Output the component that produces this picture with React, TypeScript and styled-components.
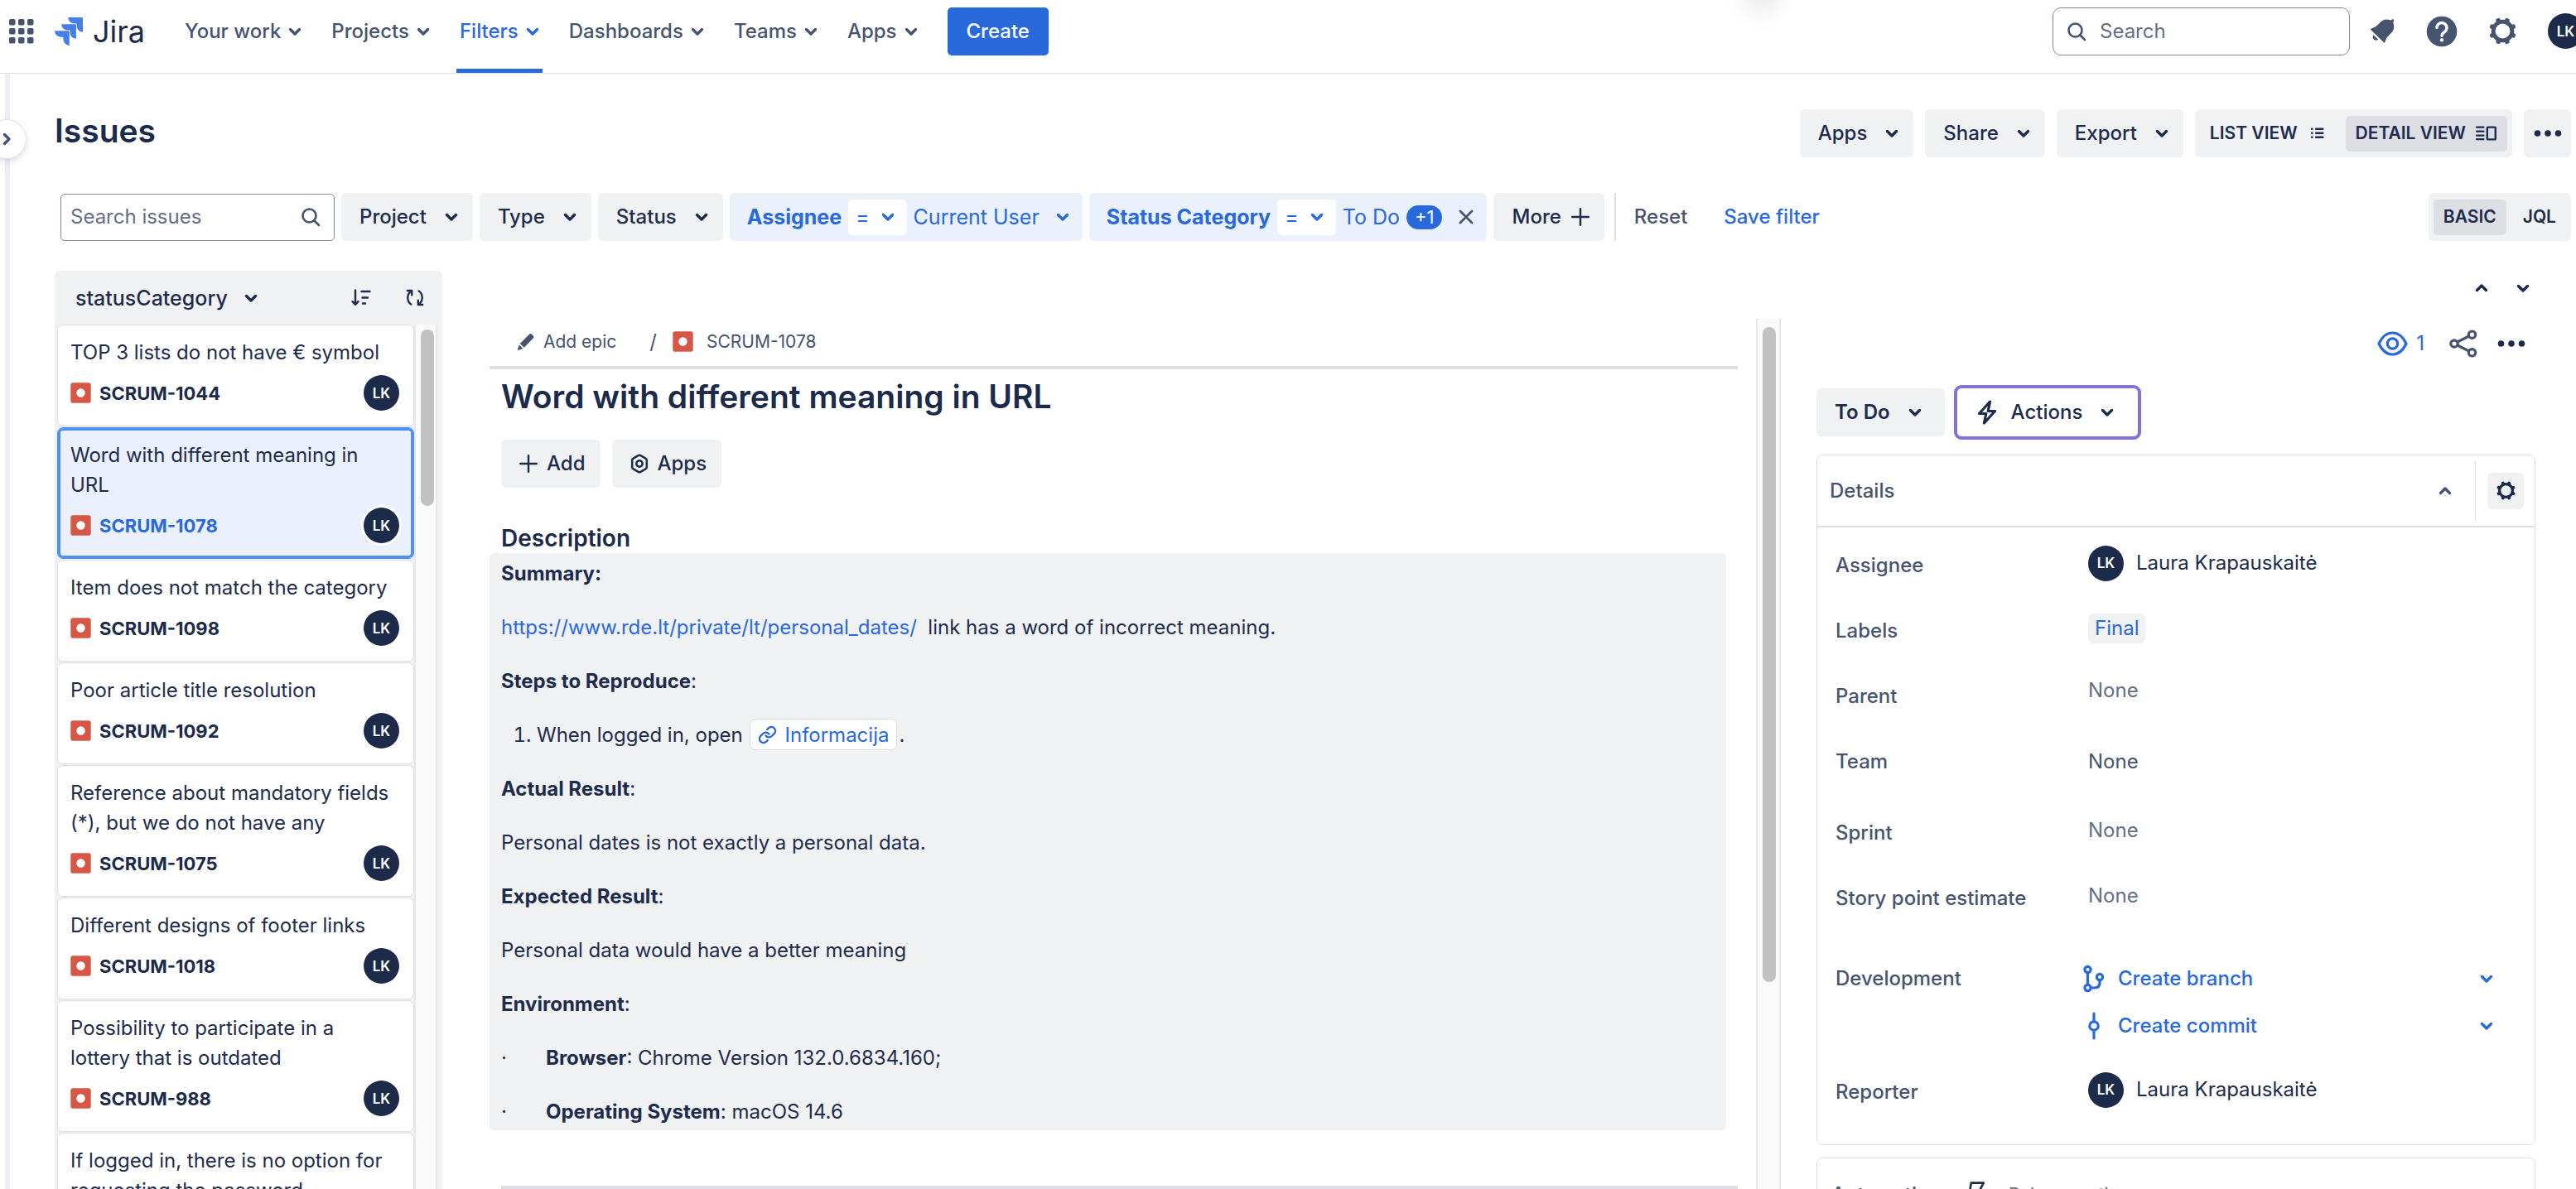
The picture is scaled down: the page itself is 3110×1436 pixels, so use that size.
import React from 'react';
import styled, { createGlobalStyle, css } from 'styled-components';

const color = {
  ink: '#1c2b4a',
  text: '#1d2c4c',
  subtle: '#46546f',
  faint: '#646f86',
  blue: '#2869dc',
  focus: '#4f8ff7',
  selected: '#eaf0fc',
  grey: '#f0f1f3',
  pressed: '#dddee4',
  line: '#dcdfe4',
  bug: '#d65745',
  purple: '#8073d9',
};

const GlobalStyle = createGlobalStyle`
  * { box-sizing: border-box; }
  body {
    margin: 0;
    background: #fff;
    color: ${color.text};
    font-family: Inter, "Liberation Sans", sans-serif;
    font-size: 24px;
    line-height: 36px;
  }
  button, input { font: inherit; color: inherit; }
  button { border: 0; padding: 0; margin: 0; background: none; cursor: pointer; }
  a { color: ${color.blue}; text-decoration: none; }
  h1, h2, h3, p, ol, ul, dl, dd, dt { margin: 0; padding: 0; }
  ul { list-style: none; }
  svg { display: block; flex: none; }
`;

/* ---------- icons ---------- */

const Chevron = ({ up = false }: { up?: boolean }) => (
  <svg width="16" height="16" viewBox="0 0 16 16" fill="none" stroke="currentColor" strokeWidth="3.4" strokeLinecap="round" strokeLinejoin="round" aria-hidden="true">
    <path d={up ? 'M2.5 10.5 8 5l5.500 5.500' : 'M2.500 5.500 8 11l5.500-5.500'} />
  </svg>
);

const SwitcherIcon = () => (
  <svg width="30" height="30" viewBox="0 0 30 30" fill="currentColor" aria-hidden="true">
    {[0, 11, 22].map((y) => [0, 11, 22].map((x) => <rect key={`${x}-${y}`} x={x} y={y} width="7.500" height="7.500" rx="1.800" />))}
  </svg>
);

const JiraMark = () => (
  <svg width="34" height="34" viewBox="0 0 24 24" fill="#467fe6" aria-hidden="true">
    <path d="M11.571 11.513H0a5.218 5.218 0 0 0 5.232 5.215h2.130v2.057A5.215 5.215 0 0 0 12.575 24V12.518a1.005 1.005 0 0 0-1.005-1.005zm5.723-5.756H5.736a5.215 5.215 0 0 0 5.215 5.214h2.129v2.058a5.218 5.218 0 0 0 5.215 5.214V6.758a1.001 1.001 0 0 0-1.001-1.001zM23.013 0H11.455a5.215 5.215 0 0 0 5.215 5.215h2.129v2.057A5.215 5.215 0 0 0 24 12.483V1.005A1.001 1.001 0 0 0 23.013 0z" />
  </svg>
);

const SearchIcon = () => (
  <svg width="24" height="24" viewBox="0 0 24 24" fill="none" stroke={color.subtle} strokeWidth="2.600" strokeLinecap="round" aria-hidden="true">
    <circle cx="10.500" cy="10.500" r="8" />
    <path d="m16.500 16.500 5.500 5.500" />
  </svg>
);

const BellIcon = () => (
  <svg width="30" height="30" viewBox="0 0 30 30" fill="currentColor" aria-hidden="true">
    <path d="M.500 12.200 7 9.200C10 7.500 12 4 15.500 1.800 18.500 0 22 .200 25.200 1.500L27.500.300q1.800-.200 1.600 1.400L28.300 4.500C29.800 8 29.600 12 27.500 15c-2 3-5.500 5-7.200 8L17.800 29z" />
    <path d="M4.600 19.200C1.800 21.800 5.500 28 10.200 24.800z" />
  </svg>
);

const HelpIcon = () => (
  <svg width="38" height="38" viewBox="0 0 38 38" fill="none" aria-hidden="true">
    <circle cx="19" cy="19" r="18.300" fill="currentColor" />
    <path d="M13 14.500a6 6 0 1 1 9.500 4.900c-2.300 1.600-3.500 2.300-3.500 4.900" stroke="#fff" strokeWidth="3.400" strokeLinecap="round" />
    <circle cx="19" cy="29.400" r="2.200" fill="#fff" />
  </svg>
);

const GearIcon = ({ size = 33 }: { size?: number }) => (
  <svg width={size} height={size} viewBox="0 0 32 32" aria-hidden="true">
    <circle cx="16" cy="16" r="11" fill="none" stroke="currentColor" strokeWidth="4.600" />
    {[0, 1, 2, 3, 4, 5, 6, 7].map((i) => (
      <path key={i} d="M12.900 4.200 13.600 1q.300-.900 1.200-.900h2.400q.900 0 1.200.900l.700 3.200z" fill="currentColor" transform={`rotate(${22.5 + i * 45} 16 16)`} />
    ))}
  </svg>
);

const ListIcon = () => (
  <svg width="16" height="14" viewBox="0 0 16 14" fill="currentColor" aria-hidden="true">
    {[0, 5, 10].map((y) => (
      <g key={y}>
        <rect x="0" y={y + 0.5} width="2.600" height="2.600" rx="1" />
        <rect x="5" y={y + 0.5} width="10.500" height="2.600" rx="1" />
      </g>
    ))}
  </svg>
);

const DetailIcon = () => (
  <svg width="26" height="18" viewBox="0 0 26 18" aria-hidden="true">
    {[0.5, 5.5, 10.5, 15].map((y) => <rect key={y} x="0" y={y} width="10.500" height="2.200" rx="1" fill="currentColor" />)}
    <rect x="13.800" y="1.600" width="10" height="14.800" rx="1" fill="none" stroke="currentColor" strokeWidth="2.400" />
  </svg>
);

const DotsIcon = () => (
  <svg width="34" height="10" viewBox="0 0 34 10" fill="currentColor" aria-hidden="true">
    <circle cx="4.500" cy="5" r="3.800" />
    <circle cx="17" cy="5" r="3.800" />
    <circle cx="29.500" cy="5" r="3.800" />
  </svg>
);

const PlusIcon = () => (
  <svg width="22" height="22" viewBox="0 0 22 22" stroke="currentColor" strokeWidth="2.400" strokeLinecap="round" aria-hidden="true">
    <path d="M11 1.200v19.600M1.200 11h19.600" />
  </svg>
);

const CrossIcon = () => (
  <svg width="18" height="18" viewBox="0 0 18 18" stroke={color.subtle} strokeWidth="2.800" strokeLinecap="round" aria-hidden="true">
    <path d="m2 2 14 14M16 2 2 16" />
  </svg>
);

const SortIcon = () => (
  <svg width="24" height="21" viewBox="0 0 24 21" fill="none" stroke="currentColor" strokeWidth="2.400" strokeLinecap="round" strokeLinejoin="round" aria-hidden="true">
    <path d="M5 1.500v17M1.500 15.200 5 18.800l3.500-3.600M12.500 3h10M13.500 10.500h6.500M14 17.500h3" />
  </svg>
);

const RefreshIcon = () => (
  <svg width="22" height="21" viewBox="0 0 22 21" fill="none" stroke="currentColor" strokeWidth="2.400" strokeLinecap="round" strokeLinejoin="round" aria-hidden="true">
    <path d="M1.800 2h5.400v5.200M7 2.300C.800 6 .800 14.500 6.300 18.600M20.200 19h-5.400v-5.200M15 18.700c6.200-3.700 6.200-12.200.700-16.300" />
  </svg>
);

const BugIcon = () => (
  <svg width="25" height="25" viewBox="0 0 25 25" aria-hidden="true">
    <rect x=".300" y=".300" width="24.400" height="24.400" rx="2.800" fill={color.bug} />
    <circle cx="12.500" cy="12.500" r="5.200" fill="#fff" />
  </svg>
);

const PencilIcon = () => (
  <svg width="22" height="22" viewBox="0 0 22 22" fill="currentColor" aria-hidden="true">
    <path d="M14.800 2q1.600-1.700 3.300-.200l1.700 1.600q1.500 1.600 0 3.200L8.700 17.700 3.800 13z" />
    <path d="M2.800 14.500 7.400 19 1.600 20.900q-.900.200-.700-.700z" />
  </svg>
);

const HexIcon = () => (
  <svg width="22" height="24" viewBox="0 0 22 24" fill="none" stroke="currentColor" strokeWidth="2.500" strokeLinejoin="round" aria-hidden="true">
    <path d="M9.600 2.200q1.400-.800 2.800 0l6 3.500q1.400.800 1.400 2.300v8q0 1.500-1.400 2.300l-6 3.500q-1.400.800-2.800 0l-6-3.500Q2.200 17.500 2.200 16V8q0-1.500 1.400-2.300z" />
    <circle cx="11" cy="12" r="3.700" />
  </svg>
);

const LinkIcon = () => (
  <svg width="23" height="23" viewBox="0 0 24 24" fill="none" stroke="currentColor" strokeWidth="2.500" strokeLinecap="round" strokeLinejoin="round" aria-hidden="true">
    <path d="M10 13a5 5 0 0 0 7.540.540l3-3a5 5 0 0 0-7.070-7.070l-1.720 1.710" />
    <path d="M14 11a5 5 0 0 0-7.540-.540l-3 3a5 5 0 0 0 7.070 7.070l1.710-1.710" />
  </svg>
);

const EyeIcon = () => (
  <svg width="37" height="30" viewBox="0 0 37 30" fill="none" stroke="currentColor" strokeWidth="3.200" aria-hidden="true">
    <path d="M2 15C6 6.500 12 2 18.500 2S31 6.500 35 15c-4 8.500-10 13-16.500 13S6 23.500 2 15z" strokeLinejoin="round" />
    <circle cx="18.500" cy="15" r="6.200" />
  </svg>
);

const ShareIcon = () => (
  <svg width="34" height="34" viewBox="0 0 34 34" fill="none" stroke={color.subtle} strokeWidth="3.200" aria-hidden="true">
    <circle cx="6" cy="17" r="4.200" />
    <circle cx="27.500" cy="6.200" r="4.200" />
    <circle cx="27.500" cy="27.800" r="4.200" />
    <path d="m9.800 15 14-7M9.800 19l14 7" />
  </svg>
);

const BoltIcon = () => (
  <svg width="24" height="30" viewBox="0 0 24 30" fill="none" stroke="currentColor" strokeWidth="3.200" strokeLinejoin="round" aria-hidden="true">
    <path d="M15.500 2 2.500 16.500h8.300L8.500 28l13-14.500h-8.300z" />
  </svg>
);

const FlashIcon = () => (
  <svg width="22" height="32" viewBox="0 0 22 32" fill="none" stroke={color.ink} strokeWidth="2.600" strokeLinejoin="round" aria-hidden="true">
    <path d="M4.800 1.600h15l-5.300 10h5.300L4 30l3-12H2z" />
  </svg>
);

const BranchIcon = () => (
  <svg width="26" height="34" viewBox="0 0 26 34" fill="none" stroke="currentColor" strokeWidth="3.200" strokeLinecap="round" aria-hidden="true">
    <circle cx="5.500" cy="6" r="3.600" />
    <circle cx="5.500" cy="28" r="3.600" />
    <circle cx="20" cy="15" r="3.600" />
    <path d="M5.500 10v14M20 19v3q0 6-6 6H9.500" />
  </svg>
);

const CommitIcon = () => (
  <svg width="26" height="34" viewBox="0 0 26 34" fill="none" stroke="currentColor" strokeWidth="3.200" strokeLinecap="round" aria-hidden="true">
    <circle cx="13" cy="17" r="5.200" />
    <path d="M13 2v9.500M13 22.500V32" />
  </svg>
);

/* ---------- shared parts ---------- */

const Avatar = styled.span<{ $ring?: boolean }>`
  display: grid;
  place-items: center;
  flex: none;
  width: 43px;
  height: 43px;
  border-radius: 50%;
  background: ${color.ink};
  color: #fff;
  font-size: 17px;
  line-height: 20px;
  font-weight: 600;
  ${(p) => p.$ring && css`box-shadow: 0 0 0 3px #fff;`}
`;

const GreyButton = styled.button<{ $gap?: number }>`
  display: flex;
  align-items: center;
  flex: none;
  gap: ${(p) => p.$gap ?? 22}px;
  height: 58px;
  padding: 0 18px 0 22px;
  border-radius: 6px;
  background: ${color.grey};
  font-weight: 500;
  white-space: nowrap;
`;

const IconButton = styled.button`
  display: grid;
  place-items: center;
  flex: none;
`;

/* ---------- header ---------- */

const Shell = styled.div`
  display: flex;
  flex-direction: column;
  height: 100vh;
  overflow: hidden;
`;

const Header = styled.header`
  position: relative;
  display: flex;
  align-items: center;
  flex: none;
  height: 89px;
  padding: 0 0 13px 11px;
  border-bottom: 1px solid ${color.line};
  overflow: hidden;
  color: ${color.subtle};
`;

const TopGlow = styled.span`
  position: absolute;
  top: -20px;
  left: 68%;
  width: 24px;
  height: 20px;
  border-radius: 50%;
  box-shadow: 0 4px 32px 8px rgba(0, 0, 0, 0.12);
`;

const Brand = styled.a`
  display: flex;
  align-items: center;
  gap: 12px;
  margin-left: 25px;
  color: ${color.ink};
  font-size: 36px;
  line-height: 44px;
`;

const Nav = styled.nav`
  display: flex;
  align-items: center;
  gap: 28px;
  margin-left: 44px;
`;

const NavItem = styled.button<{ $active?: boolean }>`
  display: flex;
  align-items: center;
  gap: 9px;
  height: 88px;
  margin-bottom: -13px;
  padding: 1px 4px 13px;
  font-weight: 500;
  ${(p) => p.$active && css`
    color: ${color.blue};
    box-shadow: inset 0 -5px 0 ${color.blue};
  `}
`;

const CreateButton = styled.button`
  height: 58px;
  margin-left: 32px;
  padding: 0 23px;
  border-radius: 5px;
  background: ${color.blue};
  color: #fff;
  font-weight: 500;
`;

const HeaderTools = styled.div`
  display: flex;
  align-items: center;
  gap: 24px;
  margin-left: auto;
  margin-right: -9px;
`;

const SearchBox = styled.label<{ $wide?: boolean }>`
  display: flex;
  align-items: center;
  flex: none;
  gap: 16px;
  width: ${(p) => (p.$wide ? 359 : 331)}px;
  height: ${(p) => (p.$wide ? 58 : 57)}px;
  padding: 0 16px 0 ${(p) => (p.$wide ? 16 : 11)}px;
  border: 1px solid #7f8ba0;
  border-radius: ${(p) => (p.$wide ? 10 : 5)}px;

  input {
    flex: 1;
    min-width: 0;
    padding: 0;
    border: 0;
    outline: 0;
    background: transparent;
  }
  input::placeholder { color: ${color.faint}; opacity: 1; }
`;

/* ---------- page frame ---------- */

const Frame = styled.div`
  display: flex;
  flex: 1;
  min-height: 0;
`;

const Rail = styled.div`
  position: relative;
  flex: none;
  width: 12px;
  border-right: 6px solid #edeef2;
`;

const ExpandButton = styled.button`
  position: absolute;
  top: 56px;
  left: -15px;
  display: flex;
  align-items: center;
  justify-content: flex-end;
  width: 46px;
  height: 46px;
  padding-right: 15px;
  border-radius: 50%;
  background: #fff;
  color: ${color.subtle};
  box-shadow: 0 0 0 1px #e3e5ea, 0 4px 8px rgba(9, 30, 66, 0.16);
  svg { transform: rotate(-90deg); }
`;

const Page = styled.main`
  display: flex;
  flex-direction: column;
  flex: 1;
  min-width: 0;
  padding: 43px 6px 0 54px;
`;

const Bar = styled.div<{ $gap: number }>`
  display: flex;
  align-items: center;
  gap: ${(p) => p.$gap}px;
`;

const PageTitle = styled.h1`
  margin-right: auto;
  padding-bottom: 6px;
  font-size: 39px;
  line-height: 52px;
  font-weight: 600;
  color: ${color.ink};
`;

const Toggle = styled.div<{ $gap: number }>`
  display: flex;
  align-items: center;
  gap: ${(p) => p.$gap}px;
  height: 58px;
  padding: 0 6px;
  border-radius: 6px;
  background: ${color.grey};
`;

const ToggleOption = styled.button<{ $on?: boolean; $gap?: number }>`
  display: flex;
  align-items: center;
  gap: ${(p) => p.$gap ?? 12}px;
  height: 43px;
  padding: 0 12px;
  border-radius: 5px;
  background: ${(p) => (p.$on ? color.pressed : 'transparent')};
  font-size: 21px;
  line-height: 24px;
  font-weight: 600;
  white-space: nowrap;
`;

const MoreButton = styled(GreyButton)`
  justify-content: center;
  width: 57px;
  padding: 0;
`;

const Filters = styled(Bar)`
  margin: 43px 0 36px 7px;
`;

const FilterChip = styled.div`
  display: flex;
  align-items: center;
  gap: 8px;
  height: 58px;
  padding: 0 16px 0 21px;
  border-radius: 6px;
  background: ${color.selected};
  color: ${color.blue};
  font-size: 25px;
  white-space: nowrap;
`;

const ChipValue = styled.button<{ $gap: number }>`
  display: flex;
  align-items: center;
  gap: ${(p) => p.$gap}px;
`;

const Operator = styled.button`
  display: flex;
  align-items: center;
  gap: 14px;
  height: 43px;
  padding: 0 15px 0 9px;
  border-radius: 5px;
  background: #fff;
`;

const CountBadge = styled.span`
  padding: 0 10px;
  border-radius: 15px;
  background: ${color.blue};
  color: #fff;
  font-size: 22px;
  line-height: 29px;
`;

const ClearButton = styled(IconButton)`
  margin-left: 12px;
`;

const Rule = styled.span`
  width: 2px;
  height: 58px;
  margin-left: 4px;
  background: ${color.line};
`;

const TextButton = styled.button<{ $primary?: boolean }>`
  padding: 0 ${(p) => (p.$primary ? 22 : 14)}px;
  color: ${(p) => (p.$primary ? color.blue : color.subtle)};
  font-weight: 500;
`;

const Spacer = styled.span`
  flex: 1;
`;

/* ---------- issue list ---------- */

const Split = styled.div`
  display: flex;
  flex: 1;
  min-height: 0;
`;

const ListPanel = styled.section`
  display: flex;
  flex-direction: column;
  flex: none;
  width: 468px;
  padding: 0 6px 0 3px;
  border-radius: 6px 6px 0 0;
  background: ${color.grey};
`;

const ListHead = styled.div`
  display: flex;
  align-items: center;
  gap: 42px;
  flex: none;
  height: 65px;
  padding: 0 16px 0 22px;
`;

const SortField = styled.button`
  display: flex;
  align-items: center;
  gap: 20px;
  margin-right: auto;
  font-size: 25px;
  font-weight: 500;
`;

const ListScroll = styled.div`
  display: flex;
  flex: 1;
  min-height: 0;
`;

const Cards = styled.ul`
  flex: 1;
  min-width: 0;
  overflow: hidden;
`;

const Card = styled.li<{ $selected?: boolean }>`
  margin-bottom: 1px;
  padding: 15px 17px 18px 15px;
  border: 1px solid ${color.line};
  border-radius: 7px;
  background: #fff;
  ${(p) => p.$selected && css`
    border-color: ${color.focus};
    background: ${color.selected};
    box-shadow: inset 0 0 0 3px ${color.focus};
  `}
`;

const CardTitle = styled.p`
  padding-right: 6px;
`;

const CardMeta = styled.div`
  display: flex;
  align-items: center;
  gap: 10px;
  margin-top: 9px;
  ${Avatar} { margin-left: auto; }
`;

const CardKey = styled.a<{ $selected?: boolean }>`
  color: ${(p) => (p.$selected ? color.blue : color.ink)};
  font-size: 22px;
  line-height: 28px;
  font-weight: 700;
`;

const Track = styled.div<{ $wide?: boolean }>`
  flex: none;
  width: ${(p) => (p.$wide ? 30 : 28)}px;
  padding-top: ${(p) => (p.$wide ? 10 : 6)}px;
  padding-left: 6px;
  border: solid #e8e8ea;
  border-width: 0 2px;
  background: #fafafa;
`;

const Thumb = styled.div<{ $share: number }>`
  width: 16px;
  height: ${(p) => p.$share}%;
  border-radius: 8px;
  background: #c1c1c1;
`;

/* ---------- issue view ---------- */

const IssueArea = styled.section`
  display: flex;
  flex-direction: column;
  flex: 1;
  min-width: 0;
  padding-left: 57px;
`;

const Pager = styled.div`
  display: flex;
  align-items: flex-start;
  justify-content: flex-end;
  gap: 34px;
  flex: none;
  height: 58px;
  padding: 13px 50px 0 0;
`;

const IssueColumns = styled.div`
  display: flex;
  flex: 1;
  min-height: 0;
`;

const IssueMain = styled.article`
  flex: 1;
  min-width: 0;
  margin-right: 22px;
  overflow: hidden;
`;

const Crumbs = styled.nav`
  display: flex;
  align-items: center;
  height: 61px;
  padding: 0 0 2px 33px;
  border-bottom: 4px solid ${color.pressed};
  color: ${color.subtle};
  font-size: 21px;
  line-height: 28px;
  a { color: inherit; }
`;

const AddEpic = styled.button`
  display: flex;
  align-items: center;
  gap: 10px;
`;

const CrumbSlash = styled.span`
  margin: 0 19px 0 40px;
  font-size: 24px;
`;

const CrumbKey = styled.a`
  margin-left: 16px;
`;

const IssueBody = styled.div`
  padding-left: 14px;
`;

const IssueTitle = styled.h2`
  padding-top: 7px;
  font-size: 39px;
  line-height: 52px;
  font-weight: 600;
  color: ${color.ink};
`;

const IssueActions = styled.div`
  display: flex;
  gap: 14px;
  margin-top: 26px;
`;

const SectionTitle = styled.h3`
  margin-top: 43px;
  font-size: 28px;
  line-height: 36px;
  font-weight: 600;
  color: ${color.ink};
`;

const Description = styled.div`
  display: grid;
  row-gap: 22px;
  margin-right: 14px;
  padding: 3px 14px 1px;
  border-radius: 5px;
  background: ${color.grey};
  line-height: 43px;
  strong { font-weight: 700; }
  a { white-space: pre; }
`;

const Steps = styled.ol`
  padding-left: 43px;
`;

const SmartLink = styled.a`
  display: inline-flex;
  align-items: center;
  gap: 10px;
  height: 38px;
  margin: 2px 2px 0 1px;
  padding: 0 9px;
  border: 1px solid ${color.line};
  border-radius: 7px;
  background: #fff;
  vertical-align: top;
`;

const Bullet = styled.span`
  display: inline-block;
  width: 54px;
`;

const Divider = styled.div`
  height: 6px;
  margin: 67px 0 0 14px;
  background: ${color.pressed};
`;

/* ---------- side panel ---------- */

const Side = styled.aside`
  flex: none;
  width: 868px;
  margin: 0 43px;
  overflow: hidden;
`;

const Watchers = styled.div`
  display: flex;
  justify-content: flex-end;
  align-items: center;
  gap: 24px;
  height: 60px;
  padding-right: 12px;
`;

const WatchButton = styled.button`
  display: flex;
  align-items: center;
  gap: 10px;
  margin-right: 6px;
  color: ${color.blue};
`;

const StatusRow = styled.div`
  display: flex;
  align-items: center;
  gap: 11px;
  margin: 20px 0 18px;
`;

const StatusButton = styled(GreyButton)`
  padding: 0 28px 0 22px;
  font-weight: 600;
`;

const ActionsButton = styled(GreyButton)`
  height: 66px;
  padding: 0 29px 0 24px;
  border: 4px solid ${color.purple};
  border-radius: 9px;
  background: #fff;
  svg:first-child { margin-right: -5px; }
`;

const Panel = styled.section`
  margin-bottom: 15px;
  border: 1px solid ${color.line};
  border-radius: 7px;
`;

const PanelHead = styled.div`
  display: flex;
  align-items: center;
  height: 87px;
  padding: 0 13px 0 15px;
  border-bottom: 2px solid ${color.line};
  color: ${color.subtle};
  font-weight: 500;
`;

const Collapse = styled.button`
  display: flex;
  flex: 1;
  align-items: center;
  justify-content: space-between;
  height: 72px;
  margin-right: 14px;
  padding-right: 28px;
  border-right: 1px solid ${color.line};
  font-weight: 500;
`;

const GearButton = styled(IconButton)`
  width: 44px;
  height: 44px;
  border-radius: 6px;
  background: ${color.grey};
  color: ${color.ink};
`;

const Fields = styled.dl`
  padding: 6px 0 24px;
`;

const Field = styled.div<{ $height?: number; $before?: number }>`
  display: grid;
  grid-template-columns: 305px 1fr;
  height: ${(p) => p.$height ?? 79}px;
  margin-top: ${(p) => p.$before ?? 0}px;
  padding-left: 22px;
`;

const FieldLabel = styled.dt`
  padding-top: 22px;
  color: ${color.subtle};
  font-weight: 500;
`;

const FieldValue = styled.dd<{ $top?: number; $muted?: boolean }>`
  padding-top: ${(p) => p.$top ?? 19}px;
  color: ${(p) => (p.$muted ? color.faint : color.subtle)};
`;

const Person = styled.div`
  display: flex;
  align-items: center;
  gap: 15px;
  height: 36px;
  color: ${color.text};
`;

const Tag = styled.a`
  display: inline-block;
  padding: 0 8px;
  border-radius: 6px;
  background: ${color.grey};
`;

const DevRow = styled.div`
  display: flex;
  align-items: center;
  justify-content: space-between;
  height: 36px;
  margin: 0 50px 21px -6px;
  color: ${color.blue};
`;

const DevButton = styled.button`
  display: flex;
  align-items: center;
  gap: 16px;
  font-weight: 500;
`;

const AutomationHead = styled.div`
  display: flex;
  align-items: center;
  height: 88px;
  padding-left: 17px;
  color: ${color.subtle};
  font-weight: 500;
`;

const AutomationNote = styled.span`
  margin-left: 28px;
  color: ${color.faint};
  font-size: 21px;
  font-weight: 400;
`;

const AutomationIcon = styled.span`
  margin-left: 32px;
`;

/* ---------- data ---------- */

const navItems = ['Your work', 'Projects', 'Filters', 'Dashboards', 'Teams', 'Apps'];

const issues = [
  { title: 'TOP 3 lists do not have € symbol', id: 'SCRUM-1044' },
  { title: 'Word with different meaning in URL', id: 'SCRUM-1078' },
  { title: 'Item does not match the category', id: 'SCRUM-1098' },
  { title: 'Poor article title resolution', id: 'SCRUM-1092' },
  { title: 'Reference about mandatory fields (*), but we do not have any', id: 'SCRUM-1075' },
  { title: 'Different designs of footer links', id: 'SCRUM-1018' },
  { title: 'Possibility to participate in a lottery that is outdated', id: 'SCRUM-988' },
  { title: 'If logged in, there is no option for requesting the password', id: '' },
];
const selectedId = 'SCRUM-1078';

export default function App() {
  return (
    <>
      <GlobalStyle />
      <Shell>
        <Header>
          <TopGlow />
          <IconButton aria-label="Switch to"><SwitcherIcon /></IconButton>
          <Brand href="#"><JiraMark />Jira</Brand>
          <Nav>
            {navItems.map((item) => (
              <NavItem key={item} $active={item === 'Filters'}>{item}<Chevron /></NavItem>
            ))}
          </Nav>
          <CreateButton>Create</CreateButton>
          <HeaderTools>
            <SearchBox $wide>
              <SearchIcon />
              <input type="search" placeholder="Search" aria-label="Search" />
            </SearchBox>
            <Bar $gap={38}>
              <IconButton aria-label="Notifications"><BellIcon /></IconButton>
              <IconButton aria-label="Help"><HelpIcon /></IconButton>
              <IconButton aria-label="Settings"><GearIcon /></IconButton>
              <IconButton aria-label="Your profile"><Avatar>LK</Avatar></IconButton>
            </Bar>
          </HeaderTools>
        </Header>

        <Frame>
          <Rail>
            <ExpandButton aria-label="Expand sidebar"><Chevron /></ExpandButton>
          </Rail>
          <Page>
            <Bar $gap={14}>
              <PageTitle>Issues</PageTitle>
              {['Apps', 'Share', 'Export'].map((name) => (
                <GreyButton key={name}>{name}<Chevron /></GreyButton>
              ))}
              <Toggle $gap={14}>
                <ToggleOption $gap={16}>LIST VIEW<ListIcon /></ToggleOption>
                <ToggleOption $on>DETAIL VIEW<DetailIcon /></ToggleOption>
              </Toggle>
              <MoreButton aria-label="More actions"><DotsIcon /></MoreButton>
            </Bar>

            <Filters $gap={8}>
              <SearchBox>
                <input type="search" placeholder="Search issues" aria-label="Search issues" />
                <SearchIcon />
              </SearchBox>
              {['Project', 'Type', 'Status'].map((name) => (
                <GreyButton key={name}>{name}<Chevron /></GreyButton>
              ))}
              <FilterChip>
                <strong>Assignee</strong>
                <Operator>=<Chevron /></Operator>
                <ChipValue $gap={20}>Current User<Chevron /></ChipValue>
              </FilterChip>
              <FilterChip>
                <strong>Status Category</strong>
                <Operator>=<Chevron /></Operator>
                <ChipValue $gap={8}>To Do<CountBadge>+1</CountBadge></ChipValue>
                <ClearButton aria-label="Clear Status Category"><CrossIcon /></ClearButton>
              </FilterChip>
              <GreyButton $gap={12}>More<PlusIcon /></GreyButton>
              <Rule />
              <TextButton>Reset</TextButton>
              <TextButton $primary>Save filter</TextButton>
              <Spacer />
              <Toggle $gap={8}>
                <ToggleOption $on>BASIC</ToggleOption>
                <ToggleOption>JQL</ToggleOption>
              </Toggle>
            </Filters>

            <Split>
              <ListPanel>
                <ListHead>
                  <SortField>statusCategory<Chevron /></SortField>
                  <IconButton aria-label="Sort order"><SortIcon /></IconButton>
                  <IconButton aria-label="Refresh"><RefreshIcon /></IconButton>
                </ListHead>
                <ListScroll>
                  <Cards>
                    {issues.map(({ title, id }) => (
                      <Card key={title} $selected={id === selectedId}>
                        <CardTitle>{title}</CardTitle>
                        {id && (
                          <CardMeta>
                            <BugIcon />
                            <CardKey href="#" $selected={id === selectedId}>{id}</CardKey>
                            <Avatar $ring={id === selectedId}>LK</Avatar>
                          </CardMeta>
                        )}
                      </Card>
                    ))}
                  </Cards>
                  <Track><Thumb $share={20.5} /></Track>
                </ListScroll>
              </ListPanel>

              <IssueArea>
                <Pager>
                  <IconButton aria-label="Previous issue"><Chevron up /></IconButton>
                  <IconButton aria-label="Next issue"><Chevron /></IconButton>
                </Pager>
                <IssueColumns>
                  <IssueMain>
                    <Crumbs>
                      <AddEpic><PencilIcon />Add epic</AddEpic>
                      <CrumbSlash>/</CrumbSlash>
                      <BugIcon />
                      <CrumbKey href="#">SCRUM-1078</CrumbKey>
                    </Crumbs>
                    <IssueBody>
                      <IssueTitle>Word with different meaning in URL</IssueTitle>
                      <IssueActions>
                        <GreyButton $gap={11}><PlusIcon />Add</GreyButton>
                        <GreyButton $gap={11}><HexIcon />Apps</GreyButton>
                      </IssueActions>
                      <SectionTitle>Description</SectionTitle>
                    </IssueBody>
                    <Description>
                      <p><strong>Summary:</strong></p>
                      <p><a href="#">https://www.rde.lt/private/lt/personal_dates/</a>&nbsp; link has a word of incorrect meaning.</p>
                      <p><strong>Steps to Reproduce</strong>:</p>
                      <Steps>
                        <li>When logged in, open <SmartLink href="#"><LinkIcon />Informacija</SmartLink>.</li>
                      </Steps>
                      <p><strong>Actual Result</strong>:</p>
                      <p>Personal dates is not exactly a personal data.</p>
                      <p><strong>Expected Result</strong>:</p>
                      <p>Personal data would have a better meaning</p>
                      <p><strong>Environment</strong>:</p>
                      <p><Bullet>·</Bullet><strong>Browser</strong>: Chrome Version 132.0.6834.160;</p>
                      <p><Bullet>·</Bullet><strong>Operating System</strong>: macOS 14.6</p>
                    </Description>
                    <Divider />
                  </IssueMain>

                  <Track $wide><Thumb $share={76} /></Track>

                  <Side>
                    <Watchers>
                      <WatchButton aria-label="Watchers: 1"><EyeIcon />1</WatchButton>
                      <IconButton aria-label="Share"><ShareIcon /></IconButton>
                      <IconButton aria-label="Actions menu"><DotsIcon /></IconButton>
                    </Watchers>
                    <StatusRow>
                      <StatusButton>To Do<Chevron /></StatusButton>
                      <ActionsButton><BoltIcon />Actions<Chevron /></ActionsButton>
                    </StatusRow>
                    <Panel>
                      <PanelHead>
                        <Collapse>Details<Chevron up /></Collapse>
                        <GearButton aria-label="Configure"><GearIcon size={23} /></GearButton>
                      </PanelHead>
                      <Fields>
                        <Field>
                          <FieldLabel>Assignee</FieldLabel>
                          <FieldValue><Person><Avatar>LK</Avatar>Laura Krapauskaitė</Person></FieldValue>
                        </Field>
                        <Field>
                          <FieldLabel>Labels</FieldLabel>
                          <FieldValue><Tag href="#">Final</Tag></FieldValue>
                        </Field>
                        <Field>
                          <FieldLabel>Parent</FieldLabel>
                          <FieldValue $muted $top={15}>None</FieldValue>
                        </Field>
                        <Field $height={86}>
                          <FieldLabel>Team</FieldLabel>
                          <FieldValue $top={22}>None</FieldValue>
                        </Field>
                        <Field>
                          <FieldLabel>Sprint</FieldLabel>
                          <FieldValue $muted>None</FieldValue>
                        </Field>
                        <Field>
                          <FieldLabel>Story point estimate</FieldLabel>
                          <FieldValue $muted>None</FieldValue>
                        </Field>
                        <Field $height={137} $before={18}>
                          <FieldLabel>Development</FieldLabel>
                          <FieldValue $top={22}>
                            <DevRow>
                              <DevButton><BranchIcon />Create branch</DevButton>
                              <IconButton aria-label="Branch options"><Chevron /></IconButton>
                            </DevRow>
                            <DevRow>
                              <DevButton><CommitIcon />Create commit</DevButton>
                              <IconButton aria-label="Commit options"><Chevron /></IconButton>
                            </DevRow>
                          </FieldValue>
                        </Field>
                        <Field>
                          <FieldLabel>Reporter</FieldLabel>
                          <FieldValue><Person><Avatar>LK</Avatar>Laura Krapauskaitė</Person></FieldValue>
                        </Field>
                      </Fields>
                    </Panel>
                    <Panel>
                      <AutomationHead>
                        Automation
                        <AutomationIcon><FlashIcon /></AutomationIcon>
                        <AutomationNote>Rule executions</AutomationNote>
                      </AutomationHead>
                    </Panel>
                  </Side>
                </IssueColumns>
              </IssueArea>
            </Split>
          </Page>
        </Frame>
      </Shell>
    </>
  );
}
